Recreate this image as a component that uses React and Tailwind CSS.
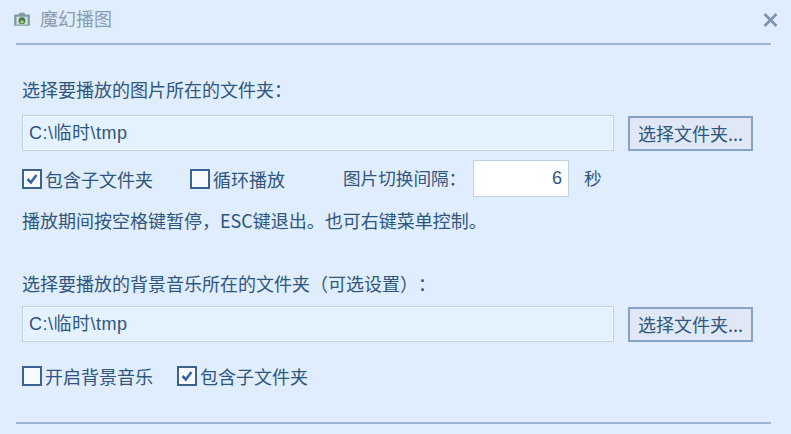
const font = { fontFamily: '"Noto Sans CJK SC", "Liberation Sans", sans-serif' };

function Check({ checked, label, className = "" }) {
  return (
    <div className={`flex items-center ${className}`}>
      <div className="w-[20px] h-[20px] shrink-0 border-2 border-[#3d6290] bg-[#f7fbff] flex items-center justify-center">
        {checked && (
          <svg width="14" height="14" viewBox="0 0 14 14">
            <path d="M2.5 7 L5.8 10.5 L11.5 3" fill="none" stroke="#3a66a5" strokeWidth="2.6" />
          </svg>
        )}
      </div>
      <span className="ml-[3px] text-[18px] leading-[20px] text-[#2f5680]">{label}</span>
    </div>
  );
}

function PathRow() {
  return (
    <div className="flex items-center">
      <div className="w-[592px] h-[36px] border border-[#bcd3e8] bg-[#e4f2ff] shadow-[inset_0_0_0_1px_#f2f9ff] pl-[6px] flex items-center text-[18px] tracking-[0.5px] text-[#2f5680]">
        <span style={{ fontFamily: '"Liberation Sans", "Noto Sans CJK SC", sans-serif' }}>C:\临时\tmp</span>
      </div>
      <div className="ml-[14px] w-[125px] h-[35px] border-2 border-[#86a3c6] bg-[#dfe8f4] flex items-center justify-center text-[18px] text-[#2f5680]">
        <span className="whitespace-nowrap">选择文件夹...</span>
      </div>
    </div>
  );
}

export default function App() {
  return (
    <div style={font} className="w-[791px] h-[434px] bg-[#e0edfc] overflow-hidden flex flex-col">
      <div className="mx-[16px] w-[755px] h-[45px] border-b-2 border-[#9db5d2] flex items-start pt-[6px]">
        <svg width="18" height="16" viewBox="0 0 16 14" className="shrink-0 -ml-[3px] mt-[5px]">
          <path d="M1 3 L5 3 L6 1.5 L10 1.5 L11 3 L15 3 L15 13 L1 13 Z" fill="#7f9c9c" />
          <rect x="3" y="5" width="10" height="7" fill="#cfe0e0" />
          <circle cx="8" cy="8.5" r="3" fill="#3f7a55" />
          <circle cx="8" cy="9.5" r="1.5" fill="#c9cf5a" />
        </svg>
        <span className="ml-[9px] text-[18px] leading-[24px] text-[#8a9cb3]">魔幻播图</span>
        <svg width="15" height="14" viewBox="0 0 15 14" className="ml-auto mr-[-7px] mt-[7px]">
          <path d="M1.5 1 L13.5 13 M13.5 1 L1.5 13" stroke="#7f93ad" strokeWidth="2.8" />
        </svg>
      </div>

      <div className="pl-[22px] flex flex-col flex-1">
        <div className="mt-[32px] h-[24px] leading-[24px] text-[18px] text-[#2f5680]">选择要播放的图片所在的文件夹：</div>
        <div className="mt-[14px]"><PathRow /></div>

        <div className="flex items-center mt-[9px] h-[37px]">
          <Check checked label="包含子文件夹" className="w-[168px]" />
          <Check label="循环播放" className="w-[153px]" />
          <span className="text-[17.6px] text-[#2f5680] w-[130px] whitespace-nowrap">图片切换间隔：</span>
          <div className="w-[96px] h-[37px] border border-[#bcd3e8] bg-white flex items-center justify-end pr-[6px] text-[18px] text-[#2f5680]" style={{ fontFamily: '"Liberation Sans", sans-serif' }}>6</div>
          <span className="ml-[15px] text-[17.6px] text-[#2f5680]">秒</span>
        </div>

        <div className="mt-[11px] h-[24px] leading-[24px] text-[18px] text-[#2f5680]">播放期间按空格键暂停，ESC键退出。也可右键菜单控制。</div>

        <div className="mt-[39px] h-[24px] leading-[24px] text-[18px] text-[#2f5680] [text-spacing-trim:space-all]">选择要播放的背景音乐所在的文件夹（可选设置）：</div>
        <div className="mt-[11px]"><PathRow /></div>

        <div className="flex items-center mt-[24px]">
          <Check label="开启背景音乐" className="w-[155px]" />
          <Check checked label="包含子文件夹" />
        </div>
      </div>

      <div className="mx-[16px] w-[755px] border-b-2 border-[#9db5d2] mb-[10px]" />
    </div>
  );
}
